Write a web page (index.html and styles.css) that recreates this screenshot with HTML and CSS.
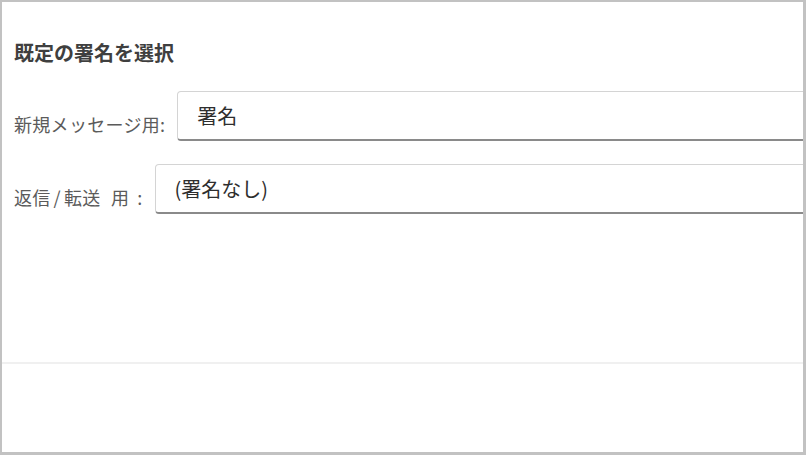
FILE: index.html
```html
<!DOCTYPE html>
<html lang="ja">
	<head>
		<meta charset="UTF-8" />
		<meta name="viewport" content="width=device-width, initial-scale=1.0" />
		<title>既定の署名を選択</title>
		<link rel="stylesheet" href="styles.css">
	</head>
	<body>
		<div class="frame">
			<div class="panel">
				<h2 class="panel-title">既定の署名を選択</h2>

				<div class="field-row">
					<label class="field-label" for="newMessage">新規メッセージ用:</label>
					<input class="field-input" id="newMessage" type="text" value="署名" readonly />
				</div>

				<div class="field-row">
					<label class="field-label field-label--reply" for="replyForward">返信<span class="slash">/</span>転送 用<span class="colon">:</span></label>
					<input class="field-input" id="replyForward" type="text" value="(署名なし)" readonly />
				</div>
			</div>

			<div class="divider"></div>
			<div class="footer"></div>
		</div>
	</body>
</html>
```

FILE: styles.css
```css
:root {
	--frame-border: #c2c2c2;
	--title: #3f3f3f;
	--label: #5b5b5b;
	--text: #2e2e2e;
	--input-border: #d4d4d4;
	--input-underline: #8a8a8a;
	--divider: #f0f0f0;
}

body {
	margin: 0;
	padding: 0;
	font-family: 'Noto Sans CJK JP', 'Noto Sans', sans-serif;
	background: white;
}

.frame {
	box-sizing: border-box;
	width: 806px;
	height: 455px;
	display: flex;
	flex-direction: column;
	border-style: solid;
	border-color: var(--frame-border);
	border-width: 2px 3px 3px 2px;
	overflow: hidden;
}

.panel {
	height: 360px;
	padding: 0 0 0 12px;
}

.panel-title {
	margin: 37px 0 0;
	font-size: 20px;
	line-height: 28px;
	font-weight: 700;
	color: var(--title);
}

.field-row {
	display: flex;
	align-items: center;
	gap: 12px;
	margin-top: 24px;
}

.field-row + .field-row {
	margin-top: 23px;
}

.field-label {
	padding-top: 15px;
	font-size: 18px;
	line-height: 26px;
	color: var(--label);
	white-space: nowrap;
	letter-spacing: 0.3px;
}

/* the reply label is set wider in the original dialog */
.field-label--reply {
	word-spacing: 6px;
}

.field-label--reply .slash {
	margin: 0 3px;
}

.field-label--reply .colon {
	margin-left: 8px;
}

.field-input {
	flex: 1;
	min-width: 0;
	height: 50px;
	box-sizing: border-box;
	margin-right: -12px;
	padding: 0 19px;
	border: 1px solid var(--input-border);
	border-bottom: 2px solid var(--input-underline);
	border-radius: 4px;
	background: white;
	font-family: inherit;
	font-size: 20px;
	color: var(--text);
	outline: none;
}

.divider {
	height: 2px;
	background: var(--divider);
}

.footer {
	flex: 1;
}
```
